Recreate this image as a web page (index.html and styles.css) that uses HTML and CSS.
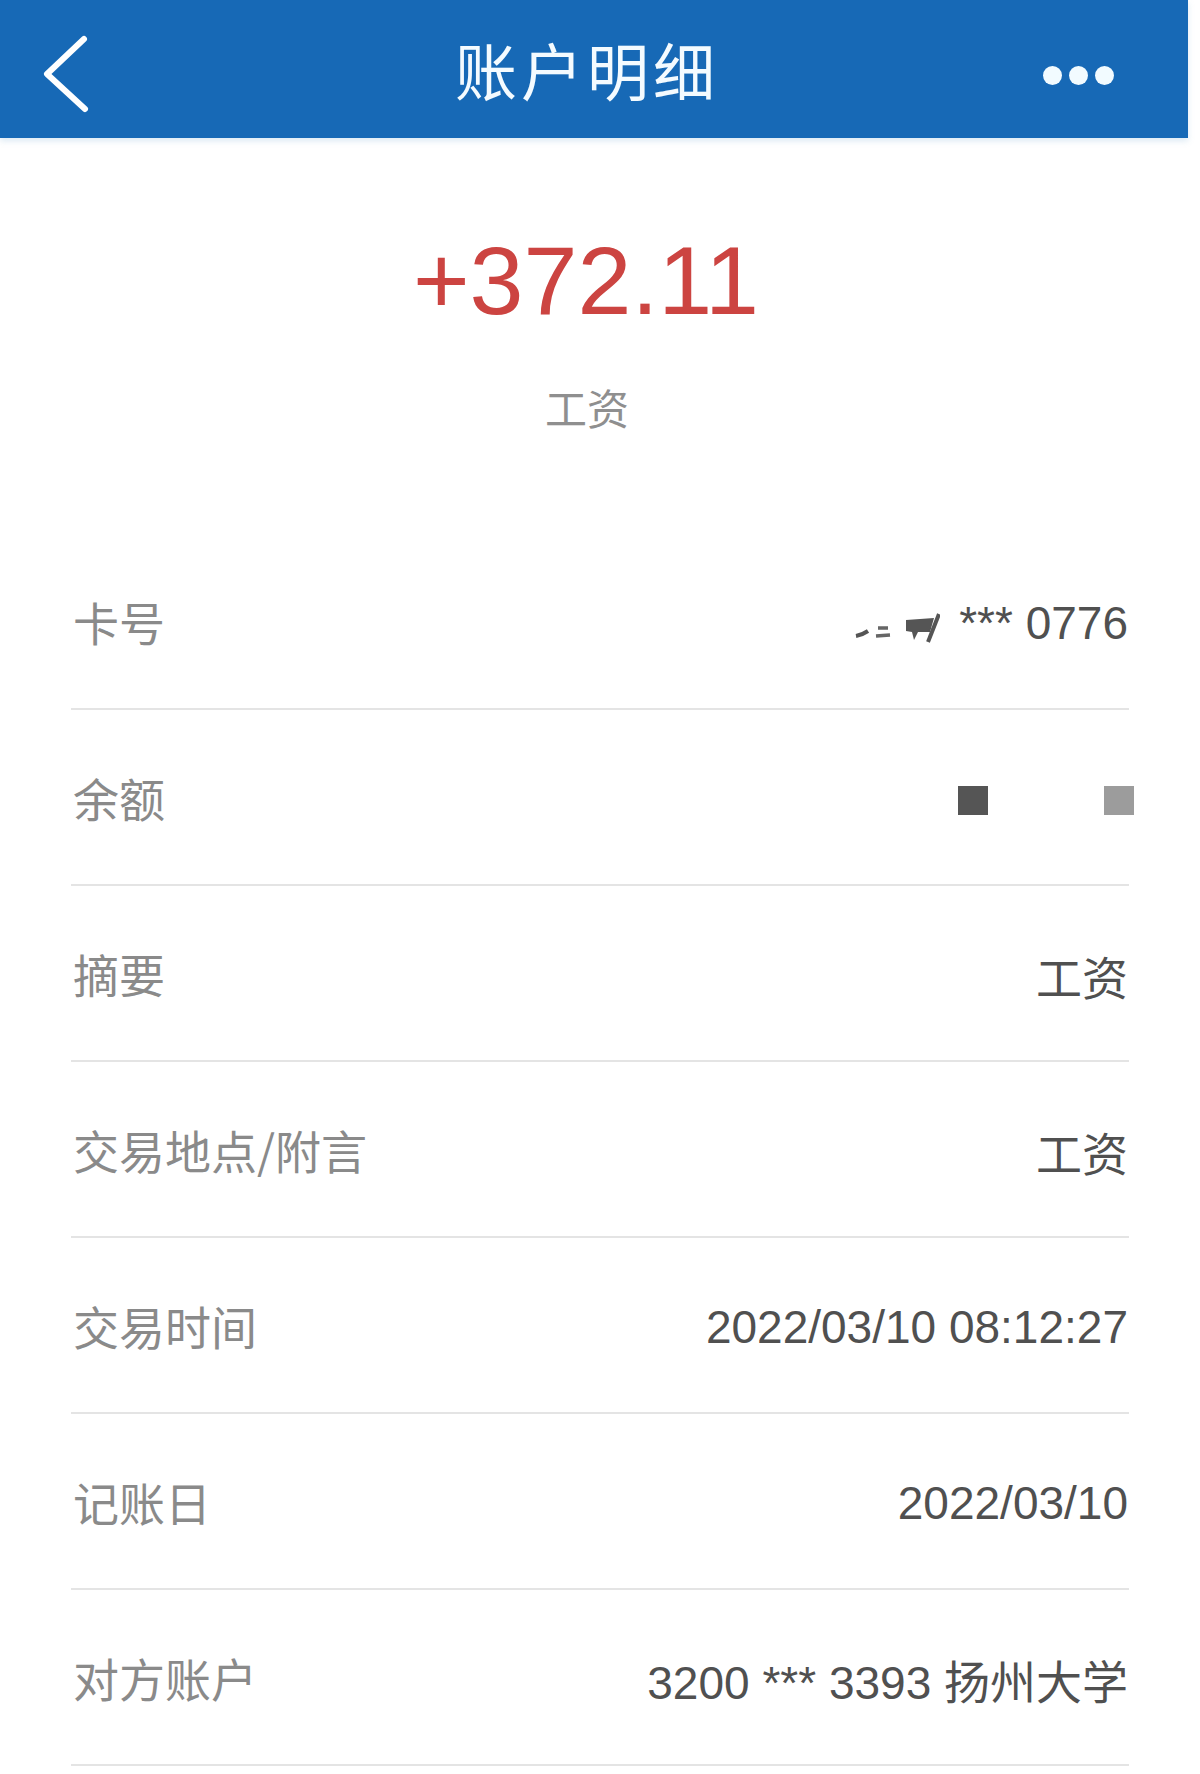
FILE: index.html
```html
<html>

<head>
	<meta charset="utf-8">
	<link rel="stylesheet" href="styles.css">
</head>

<body>
	<div class="top-bar">
		<div class="back">
			<svg width="50" height="80" viewBox="0 0 50 80">
				<polyline points="43,5 6,40 44,75" fill="none" stroke="#ffffff" stroke-width="6" stroke-linecap="round" stroke-linejoin="round" />
			</svg>
		</div>
		<div class="title">账户明细</div>
		<div class="more">
			<span class="dot"></span>
			<span class="dot"></span>
			<span class="dot"></span>
		</div>
	</div>

	<div class="summary">
		<div class="amount">+372.11</div>
		<div class="amount-note">工资</div>
	</div>

	<div class="detail-list">
		<div class="detail-row">
			<div class="label">卡号</div>
			<div class="value">
				<svg class="mask" width="86" height="40" viewBox="0 0 86 40">
					<path d="M2 30 Q8 29 14 25" fill="none" stroke="#555" stroke-width="4" />
					<path d="M24 22 L34 22 M22 30 L36 29" fill="none" stroke="#666" stroke-width="3.5" />
					<path d="M52 14 L80 12 L76 26 L64 26 L60 34 L58 26 L52 25 Z" fill="#555" />
					<path d="M85 8 L74 36" fill="none" stroke="#555" stroke-width="4" />
				</svg>
				<span class="card-tail">*** 0776</span>
			</div>
		</div>
		<div class="detail-row">
			<div class="label">余额</div>
			<div class="value hidden-balance">
				<span class="block dark"></span>
				<span class="block light"></span>
			</div>
		</div>
		<div class="detail-row">
			<div class="label">摘要</div>
			<div class="value">工资</div>
		</div>
		<div class="detail-row">
			<div class="label">交易地点/附言</div>
			<div class="value">工资</div>
		</div>
		<div class="detail-row">
			<div class="label">交易时间</div>
			<div class="value">2022/03/10 08:12:27</div>
		</div>
		<div class="detail-row">
			<div class="label">记账日</div>
			<div class="value">2022/03/10</div>
		</div>
		<div class="detail-row">
			<div class="label">对方账户</div>
			<div class="value">3200 *** 3393 扬州大学</div>
		</div>
	</div>
</body>

</html>
```

FILE: styles.css
```css
:root {
	--bank-blue: #1769b6;
	--amount-red: #cc4441;
	--label-grey: #8a8a8a;
	--value-grey: #505050;
	--line-grey: #e4e4e4;
}

body {
	margin: 0;
	background: #ffffff;
	font-family: "Liberation Sans", "Noto Sans CJK SC", sans-serif;
	width: 1200px;
}

.top-bar {
	width: 1188px;
	height: 138px;
	background: var(--bank-blue);
	display: grid;
	grid-template-columns: 1fr auto 1fr;
	align-items: center;
	box-shadow: 0 3px 6px rgba(120, 170, 210, 0.25);
}

.back {
	padding-left: 41px;
	padding-top: 10px;
	display: flex;
}

.title {
	color: #f4fbff;
	font-family: "Noto Sans CJK SC", sans-serif;
	font-size: 62px;
	letter-spacing: 4px;
	margin-right: 14px;
	line-height: 1;
}

.more {
	display: flex;
	justify-content: flex-end;
	gap: 7px;
	padding-right: 74px;
	padding-top: 12px;
}

.dot {
	width: 19px;
	height: 19px;
	border-radius: 50%;
	background: #f2fbff;
}

.summary {
	padding-top: 94px;
	padding-bottom: 102px;
	text-align: center;
}

.amount {
	color: var(--amount-red);
	font-size: 97px;
	line-height: 97px;
	margin-left: -28px;
}

.amount-note {
	margin-top: 53px;
	color: #8f8f8f;
	font-family: "Noto Sans CJK SC", sans-serif;
	font-size: 42px;
	line-height: 50px;
	margin-left: -26px;
}

.detail-list {
	margin: 0 71px;
}

.detail-row {
	height: 174px;
	border-bottom: 2px solid var(--line-grey);
	display: flex;
	justify-content: space-between;
	align-items: center;
}

.label {
	color: var(--label-grey);
	font-family: "Noto Sans CJK SC", sans-serif;
	font-size: 46px;
	padding-left: 2px;
}

.value {
	color: var(--value-grey);
	font-size: 46px;
	display: flex;
	align-items: center;
	padding-right: 1px;
	padding-top: 4px;
}

.mask {
	margin-right: 19px;
	margin-top: 6px;
}

.hidden-balance {
	gap: 116px;
	margin-right: -6px;
	padding-top: 6px;
}

.block {
	width: 30px;
	height: 29px;
}

.block.dark {
	background: #555555;
}

.block.light {
	background: #9c9c9c;
}
```
